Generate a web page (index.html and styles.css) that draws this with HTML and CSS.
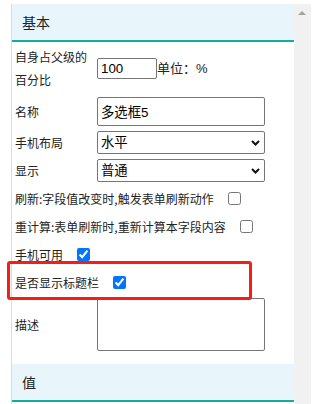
FILE: index.html
```html
<!DOCTYPE html>
<html lang="zh-CN">
<head>
    <meta charset="UTF-8">
    <meta name="viewport" content="width=device-width, initial-scale=1.0">
    <title>属性</title>
    <link rel="stylesheet" href="styles.css">
</head>
<body>
    <div class="panel">
        <div class="panel-body">
            <div class="section-title">基本</div>

            <div class="form">
                <div class="row row-percent">
                    <label class="row-label">自身占父级的百分比</label>
                    <input type="text" class="input-small" value="100">
                    <span class="unit">单位：%</span>
                </div>
                <div class="row row-name">
                    <label class="row-label">名称</label>
                    <input type="text" class="input-wide input-name" value="多选框5">
                </div>
                <div class="row">
                    <label class="row-label">手机布局</label>
                    <span class="select-wrap">
                        <select class="input-wide input-select">
                            <option>水平</option>
                            <option>垂直</option>
                        </select>
                        <svg class="chevron" width="9" height="6" viewBox="0 0 9 6"><path d="M1 1 L4.5 4.5 L8 1" fill="none" stroke="#111" stroke-width="2"/></svg>
                    </span>
                </div>
                <div class="row">
                    <label class="row-label">显示</label>
                    <span class="select-wrap">
                        <select class="input-wide input-select">
                            <option>普通</option>
                            <option>只读</option>
                        </select>
                        <svg class="chevron" width="9" height="6" viewBox="0 0 9 6"><path d="M1 1 L4.5 4.5 L8 1" fill="none" stroke="#111" stroke-width="2"/></svg>
                    </span>
                </div>
                <div class="row row-check">
                    <span>刷新:字段值改变时,触发表单刷新动作</span>
                    <input type="checkbox" class="check">
                </div>
                <div class="row row-check">
                    <span>重计算:表单刷新时,重新计算本字段内容</span>
                    <input type="checkbox" class="check">
                </div>
                <div class="row row-check">
                    <span>手机可用</span>
                    <input type="checkbox" class="check" checked>
                </div>
                <div class="row row-check">
                    <span>是否显示标题栏</span>
                    <input type="checkbox" class="check" checked>
                </div>
                <div class="row row-desc">
                    <label class="row-label">描述</label>
                    <textarea class="input-wide input-area"></textarea>
                </div>

                <!-- highlight annotation -->
                <div class="highlight"></div>
            </div>

            <div class="section-title">值</div>
        </div>
        <div class="scrollbar">
            <span class="scroll-arrow"></span>
        </div>
    </div>
</body>
</html>
```

FILE: styles.css
```css
body {
    margin: 0;
    padding: 0;
    font-family: "Noto Sans CJK SC", "Liberation Sans", sans-serif;
    font-size: 12px;
    color: #222;
    background: #fff;
}

.panel {
    display: flex;
    margin: 4px 6px 0 11px;
    height: 400px;
    border-left: 1px solid #dcdcdc;
}

.panel-body {
    flex: 1;
    min-width: 0;
}

.section-title {
    height: 36px;
    line-height: 36px;
    padding-left: 10px;
    font-size: 14px;
    color: #222;
    background: #e8f6fc;
    border-bottom: 2px solid #12ad9f;
}

.form {
    position: relative;
    padding-bottom: 11px;
}

.row {
    display: flex;
    align-items: center;
    height: 28px;
    padding-left: 3px;
}

.row-label {
    width: 82px;
    flex-shrink: 0;
}

.row-percent {
    height: 52px;
}

.row-percent .row-label {
    line-height: 23px;
    padding-right: 8px;
    width: 74px;
}

.row-name {
    height: 34px;
}

.row-desc {
    height: 57px;
}

input, select, textarea {
    font-family: "Liberation Sans", "Noto Sans CJK SC", sans-serif;
    font-size: 13.333px;
    color: #000;
    box-sizing: border-box;
    border: 1px solid #767676;
    border-radius: 2px;
    margin: 0;
    background: #fff;
}

.input-small {
    width: 60px;
    height: 21px;
    padding: 1px 3px;
}

.unit {
    font-family: "Liberation Sans", "Noto Sans CJK SC", sans-serif;
    font-size: 13px;
    margin-top: -2px;
}

.input-wide {
    width: 168px;
}

.input-name {
    height: 29px;
    padding: 1px 3px;
}

.select-wrap {
    position: relative;
    display: flex;
}

.input-select {
    height: 23px;
    padding: 0 3px;
    -webkit-appearance: none;
    appearance: none;
}

.chevron {
    position: absolute;
    right: 5px;
    top: 9px;
    pointer-events: none;
}

.input-area {
    height: 53px;
    resize: none;
}

.check {
    width: 13px;
    height: 13px;
    margin: 0 0 0 14px;
    border-radius: 2px;
}

.highlight {
    position: absolute;
    left: -5px;
    top: 219px;
    width: 239px;
    height: 33px;
    border: 3px solid #f41d17;
    border-radius: 3px;
}

.scrollbar {
    width: 17px;
    flex-shrink: 0;
    background: #f1f1f1;
    position: relative;
}

.scroll-arrow {
    position: absolute;
    left: 4px;
    top: 7px;
    width: 0;
    height: 0;
    border-left: 4px solid transparent;
    border-right: 4px solid transparent;
    border-bottom: 4px solid #a3a3a3;
}
```
